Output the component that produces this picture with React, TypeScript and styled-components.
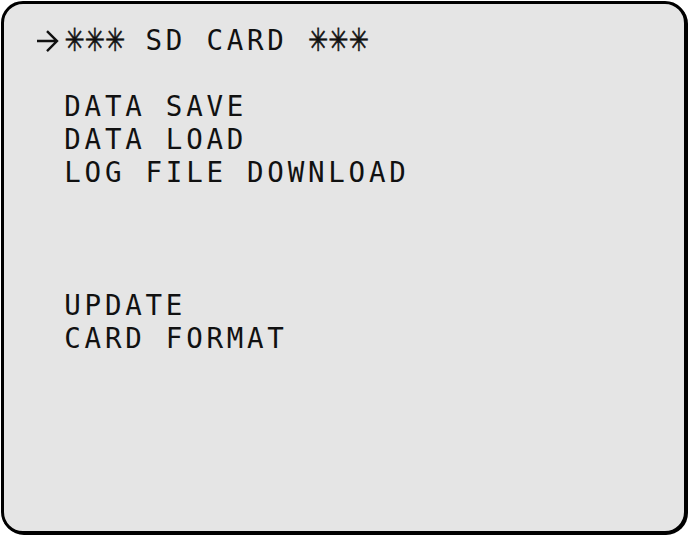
import styled, { createGlobalStyle } from 'styled-components'

const PITCH = 20.3

const GlobalStyle = createGlobalStyle`
  html, body {
    margin: 0;
    padding: 0;
    background: #ffffff;
  }
`

const Page = styled.div`
  width: 690px;
  height: 536px;
  padding: 1px 0 0 1px;
  box-sizing: border-box;
`

const Frame = styled.div`
  width: 686px;
  height: 533px;
  box-sizing: border-box;
  border: 3px solid #000;
  border-radius: 22px;
  box-shadow: 1px 1px 0 0 #000;
  background: #e5e5e5;
  padding: 20px 0 0 40px;
  display: flex;
  flex-direction: column;
`

const Line = styled.div<{ $indent?: number }>`
  height: 33.1px;
  line-height: 33.1px;
  padding-left: ${(p) => (p.$indent ?? 0) * PITCH}px;
  font-family: 'DejaVu Sans Mono', 'Liberation Mono', monospace;
  font-size: 27.5px;
  letter-spacing: 3.75px;
  color: #111;
  white-space: pre;
`

const Star = styled.span`
  display: inline-block;
  width: ${PITCH}px;
  height: 33.1px;
  vertical-align: top;
  text-align: center;
  letter-spacing: 0;
  font-family: 'DejaVu Sans', sans-serif;
  font-size: 24px;
  line-height: 33.1px;
  -webkit-text-stroke: 0.45px #111;
  transform: translateY(1px) scaleY(1.32);
`

const Cursor = styled.svg`
  display: inline-block;
  vertical-align: top;
  width: 23px;
  height: 33.1px;
  margin-left: -8px;
  margin-right: 5.3px;
`

const items = [
  { label: 'DATA SAVE', row: 2 },
  { label: 'DATA LOAD', row: 3 },
  { label: 'LOG FILE DOWNLOAD', row: 4 },
  { label: 'UPDATE', row: 8 },
  { label: 'CARD FORMAT', row: 9 },
]

const Stars = () => (
  <>
    <Star>✳</Star>
    <Star>✳</Star>
    <Star>✳</Star>
  </>
)

export default function App() {
  const rows = Array.from({ length: 10 }, (_, i) => items.find((it) => it.row === i))

  return (
    <Page>
      <GlobalStyle />
      <Frame>
        <Line>
          <Cursor viewBox="0 0 23 33">
            <path d="M1 17H20.5M11 7L21 17L11 27" fill="none" stroke="#111" strokeWidth="2.4" />
          </Cursor>
          <Stars />
          {' SD CARD '}
          <Stars />
        </Line>
        {rows.slice(1).map((it, i) => (
          <Line key={i} $indent={1}>
            {it ? it.label : ''}
          </Line>
        ))}
      </Frame>
    </Page>
  )
}
